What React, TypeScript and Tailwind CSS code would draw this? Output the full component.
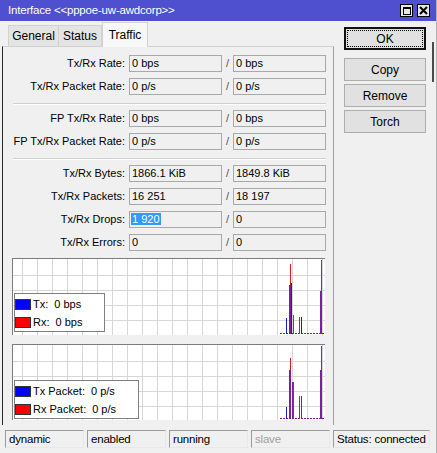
import React from "react";

type Bar = { x: number; y1: number; y2: number; w: number; c: string };

const PURPLE = "#7a1fa2";
const BLUE = "#1a1ad0";
const RED = "#d81c1c";

function Chart({ h, bars }: { h: number; bars: Bar[] }) {
  const vs: number[] = [];
  for (let x = 9.5; x < 312; x += 15) vs.push(x);
  const hs = [16.5, 31.5, 46.5, 61.5];
  return (
    <svg width={312} height={h} className="absolute left-0 top-0">
      {vs.map((x) => (
        <line key={"v" + x} x1={x} x2={x} y1={0} y2={h} stroke="#d6d6d6" strokeWidth={1} />
      ))}
      {hs.map((y) => (
        <line key={"h" + y} x1={0} x2={312} y1={y} y2={y} stroke="#d6d6d6" strokeWidth={1} />
      ))}
      <line x1={267} x2={311} y1={h - 1.5} y2={h - 1.5} stroke={PURPLE} strokeWidth={1} strokeDasharray="2 1" />
      {bars.map((b, i) => (
        <rect key={i} x={b.x} y={b.y1} width={b.w} height={b.y2 - b.y1} fill={b.c} />
      ))}
    </svg>
  );
}

function Legend({ rows, bottom }: { rows: [string, string, string][]; bottom: string }) {
  return (
    <div className={`absolute left-[1px] ${bottom} bg-white border border-[#808080] pt-[1px] pr-[22px]`}>
      {rows.map(([label, val, color]) => (
        <div key={label} className="flex items-center h-[18px]">
          <div className={`w-[16px] h-[11px] border border-[#333] ${color}`} />
          <span className="ml-[2px] whitespace-pre">{label}</span>
          <span className="ml-[6px] whitespace-pre">{val}</span>
        </div>
      ))}
    </div>
  );
}

function Field({ children, selected }: { children: React.ReactNode; selected?: boolean }) {
  return (
    <div className="h-[17px] w-[93px] border border-[#a9a9a9] bg-[#f0f0f0] pl-[2px] leading-[15px] whitespace-pre overflow-hidden">
      {selected ? <span className="bg-[#3399ff] text-white px-[1px] -ml-[1px]">{children}</span> : children}
    </div>
  );
}

function Row({ label, a, b, sel }: { label: string; a: string; b: string; sel?: boolean }) {
  return (
    <div className="flex items-center h-[17px]">
      <div className="w-[122px] text-right whitespace-pre">{label}</div>
      <div className="ml-[4px]">
        <Field selected={sel}>{a}</Field>
      </div>
      <div className="w-[11px] text-center text-[#555]">/</div>
      <Field>{b}</Field>
    </div>
  );
}

function Sep() {
  return <div className="ml-[10px] w-[313px] mt-[8px] mb-[5px] border-t border-[#d0d0d0] border-b border-b-white" />;
}

function Btn({ children }: { children: React.ReactNode }) {
  return (
    <div className="w-[82px] h-[23px] border border-[#adadad] bg-[#e1e1e1] flex items-center justify-center text-[12px]">
      {children}
    </div>
  );
}

function Seg({ w, children, dim }: { w: string; children: React.ReactNode; dim?: boolean }) {
  return (
    <div
      className={`${w} h-[18px] border border-t-[#9a9a9a] border-l-[#9a9a9a] border-r-[#e8e8e8] border-b-[#e8e8e8] pl-[3px] leading-[16px] text-[11.5px] tracking-[-0.2px] whitespace-nowrap overflow-hidden ${
        dim ? "text-[#a0a0a0]" : "text-black"
      }`}
    >
      {children}
    </div>
  );
}

const bars1: Bar[] = [
  { x: 273, y1: 59, y2: 75, w: 1, c: BLUE },
  { x: 277, y1: 5, y2: 26, w: 1, c: RED },
  { x: 276, y1: 26, y2: 75, w: 2, c: PURPLE },
  { x: 278, y1: 24, y2: 75, w: 1, c: BLUE },
  { x: 280, y1: 56, y2: 75, w: 1, c: RED },
  { x: 286, y1: 58, y2: 75, w: 1, c: RED },
  { x: 288, y1: 58, y2: 75, w: 1, c: BLUE },
  { x: 308, y1: 1, y2: 32, w: 1, c: RED },
  { x: 307, y1: 32, y2: 75, w: 2, c: PURPLE },
];

const bars2: Bar[] = [
  { x: 273, y1: 62, y2: 74, w: 1, c: BLUE },
  { x: 277, y1: 13, y2: 25, w: 1, c: RED },
  { x: 276, y1: 25, y2: 74, w: 2, c: PURPLE },
  { x: 279, y1: 37, y2: 74, w: 1, c: PURPLE },
  { x: 280, y1: 37, y2: 74, w: 1, c: RED },
  { x: 286, y1: 51, y2: 74, w: 1, c: RED },
  { x: 288, y1: 51, y2: 74, w: 1, c: PURPLE },
  { x: 308, y1: 1, y2: 25, w: 1, c: RED },
  { x: 307, y1: 25, y2: 74, w: 2, c: PURPLE },
];

export default function App() {
  return (
    <div className="relative w-[437px] h-[453px] overflow-hidden bg-[#f0f0f0] font-['Liberation_Sans',Arial,sans-serif] text-[11px] text-black border-r border-[#b0b0b0]">
      {/* title bar */}
      <div className="h-[21px] bg-[#4e50cf] flex items-center pl-[8px] pr-[6px]">
        <div className="text-white text-[11.5px] tracking-[-0.2px] flex-1">Interface &lt;&lt;pppoe-uw-awdcorp&gt;&gt;</div>
        <div className="flex gap-[4px]">
          <div className="w-[13px] h-[13px] bg-[#e6e6e6] border border-black flex items-center justify-center">
            <div className="w-[8px] h-[8px] border border-black border-t-2" />
          </div>
          <div className="w-[13px] h-[13px] bg-[#e6e6e6] border border-black flex items-center justify-center">
            <svg width="9" height="9" viewBox="0 0 9 9">
              <path d="M1 1 L8 8 M8 1 L1 8" stroke="#000" strokeWidth="2" />
            </svg>
          </div>
        </div>
      </div>

      <div className="flex">
        {/* left side */}
        <div className="ml-[2px] w-[332px]">
          {/* tabs */}
          <div className="h-[25px] flex items-end pl-[6px]">
            <div className="w-[51px] h-[21px] bg-[#e4e4e4] border border-[#d2d2d2] border-b-0 flex items-center justify-center text-[12px]">
              General
            </div>
            <div className="w-[43px] h-[21px] bg-[#e4e4e4] border border-[#d2d2d2] border-l-0 border-b-0 flex items-center justify-center text-[12px]">
              Status
            </div>
            <div className="relative z-10 -mb-px w-[46px] h-[25px] bg-[#f7f7f7] border border-[#d2d2d2] border-b-0 flex items-start justify-center pt-[3px] text-[12px]">
              Traffic
            </div>
          </div>
          {/* panel */}
          <div className="h-[379px] border-t border-[#d2d2d2] border-l border-l-[#2a2a2a] border-r border-r-[#a0a0a0] pt-[8px]">
            <div className="flex flex-col gap-[6px]">
              <Row label="Tx/Rx Rate:" a="0 bps" b="0 bps" />
              <Row label="Tx/Rx Packet Rate:" a="0 p/s" b="0 p/s" />
            </div>
            <Sep />
            <div className="flex flex-col gap-[6px]">
              <Row label="FP Tx/Rx Rate:" a="0 bps" b="0 bps" />
              <Row label="FP Tx/Rx Packet Rate:" a="0 p/s" b="0 p/s" />
            </div>
            <Sep />
            <div className="flex flex-col gap-[6px]">
              <Row label="Tx/Rx Bytes:" a="1866.1 KiB" b="1849.8 KiB" />
              <Row label="Tx/Rx Packets:" a="16 251" b="18 197" />
              <Row label="Tx/Rx Drops:" a="1 920" b="0" sel />
              <Row label="Tx/Rx Errors:" a="0" b="0" />
            </div>
            <div className="relative ml-[9px] mt-[7px] w-[313px] h-[77px] bg-white border-t border-l border-[#7c7c7c]">
              <Chart h={76} bars={bars1} />
              <Legend
                bottom="bottom-[3px]"
                rows={[
                  ["Tx:", "0 bps", "bg-[#0000ff]"],
                  ["Rx:", "0 bps", "bg-[#ff0000]"],
                ]}
              />
            </div>
            <div className="relative ml-[9px] mt-[9px] w-[313px] h-[76px] bg-white border-t border-l border-[#7c7c7c]">
              <Chart h={75} bars={bars2} />
              <Legend
                bottom="bottom-[1px]"
                rows={[
                  ["Tx Packet:", "0 p/s", "bg-[#0000ff]"],
                  ["Rx Packet:", "0 p/s", "bg-[#ff0000]"],
                ]}
              />
            </div>
          </div>
        </div>

        {/* right buttons */}
        <div className="pl-[10px] pt-[6px] flex flex-col">
          <div className="w-[82px] h-[23px] border-2 border-[#111] bg-[#e1e1e1] p-[1px]">
            <div className="w-full h-full border border-dotted border-black flex items-center justify-center text-[12px]">OK</div>
          </div>
          <div className="mt-[8px] flex flex-col gap-[3px]">
            <Btn>Copy</Btn>
            <Btn>Remove</Btn>
            <Btn>Torch</Btn>
          </div>
        </div>
      </div>

      {/* status bar */}
      <div className="mt-[5px] ml-[5px] flex gap-[3px]">
        <Seg w="w-[79px]">dynamic</Seg>
        <Seg w="w-[79px]">enabled</Seg>
        <Seg w="w-[79px]">running</Seg>
        <Seg w="w-[79px]" dim>
          slave
        </Seg>
        <Seg w="w-[97px]">Status: connected</Seg>
      </div>

      <div className="absolute right-[2px] top-[42px] w-[2px] h-[40px] bg-[#4a4a4a]" />
    </div>
  );
}
